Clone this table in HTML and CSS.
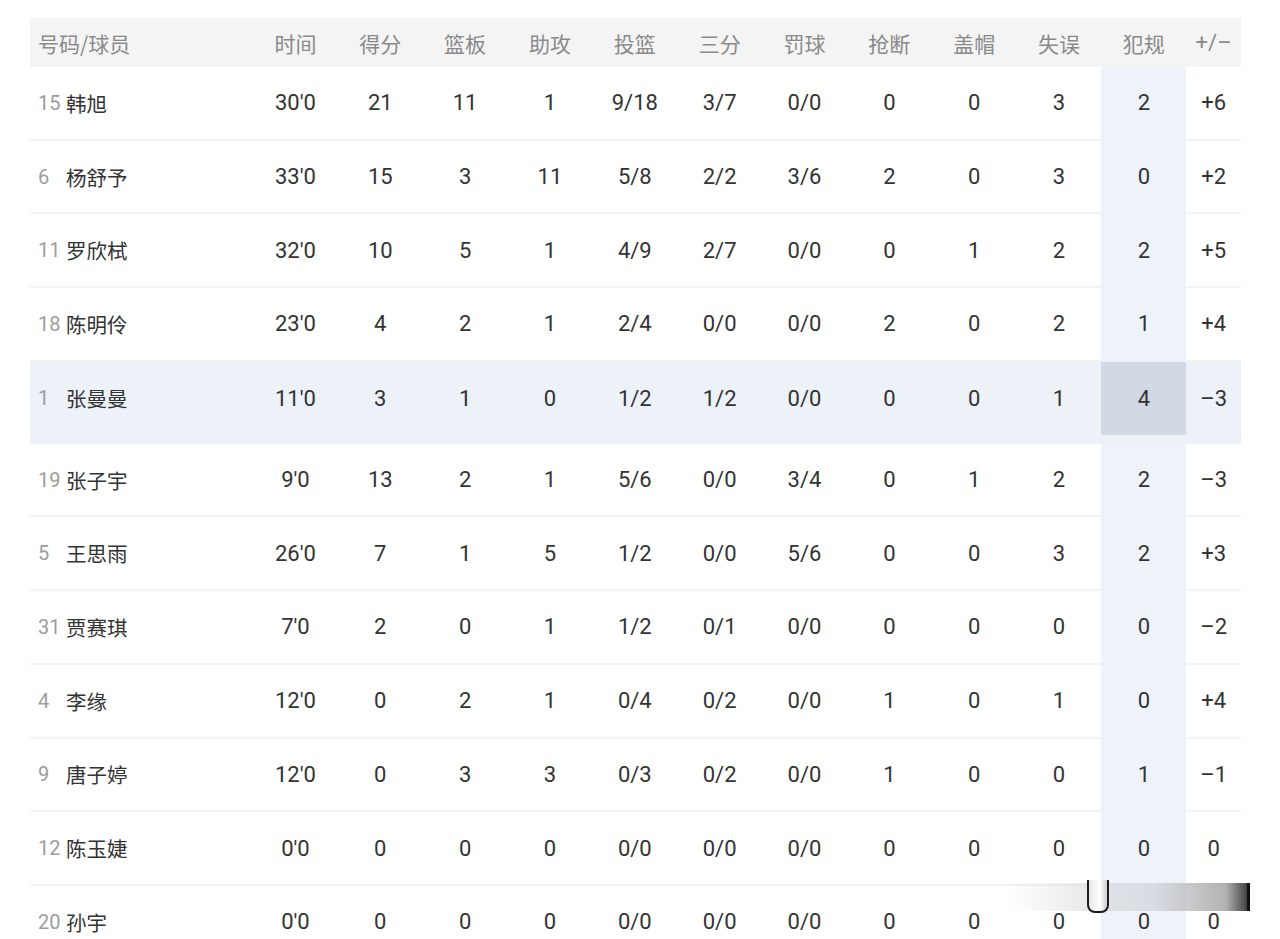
FILE: index.html
```html
<!DOCTYPE html>
<html lang="zh-CN">
<head>
<meta charset="utf-8">
<title>球员数据</title>
<link rel="stylesheet" href="styles.css">
</head>
<body>
<div class="table">
  <div class="row head">
    <div class="cell name">号码/球员</div>
    <div class="cell">时间</div><div class="cell">得分</div><div class="cell">篮板</div><div class="cell">助攻</div><div class="cell">投篮</div><div class="cell">三分</div><div class="cell">罚球</div><div class="cell">抢断</div><div class="cell">盖帽</div><div class="cell">失误</div><div class="cell">犯规</div><div class="cell pm">+/–</div>
  </div>
  <div class="row"><div class="cell name"><span class="num">15</span><span class="player">韩旭</span></div><div class="cell">30'0</div><div class="cell">21</div><div class="cell">11</div><div class="cell">1</div><div class="cell">9/18</div><div class="cell">3/7</div><div class="cell">0/0</div><div class="cell">0</div><div class="cell">0</div><div class="cell">3</div><div class="cell foul">2</div><div class="cell pm">+6</div></div>
  <div class="row"><div class="cell name"><span class="num">6</span><span class="player">杨舒予</span></div><div class="cell">33'0</div><div class="cell">15</div><div class="cell">3</div><div class="cell">11</div><div class="cell">5/8</div><div class="cell">2/2</div><div class="cell">3/6</div><div class="cell">2</div><div class="cell">0</div><div class="cell">3</div><div class="cell foul">0</div><div class="cell pm">+2</div></div>
  <div class="row"><div class="cell name"><span class="num">11</span><span class="player">罗欣栻</span></div><div class="cell">32'0</div><div class="cell">10</div><div class="cell">5</div><div class="cell">1</div><div class="cell">4/9</div><div class="cell">2/7</div><div class="cell">0/0</div><div class="cell">0</div><div class="cell">1</div><div class="cell">2</div><div class="cell foul">2</div><div class="cell pm">+5</div></div>
  <div class="row"><div class="cell name"><span class="num">18</span><span class="player">陈明伶</span></div><div class="cell">23'0</div><div class="cell">4</div><div class="cell">2</div><div class="cell">1</div><div class="cell">2/4</div><div class="cell">0/0</div><div class="cell">0/0</div><div class="cell">2</div><div class="cell">0</div><div class="cell">2</div><div class="cell foul">1</div><div class="cell pm">+4</div></div>
  <div class="row hl"><div class="cell name"><span class="num">1</span><span class="player">张曼曼</span></div><div class="cell">11'0</div><div class="cell">3</div><div class="cell">1</div><div class="cell">0</div><div class="cell">1/2</div><div class="cell">1/2</div><div class="cell">0/0</div><div class="cell">0</div><div class="cell">0</div><div class="cell">1</div><div class="cell foul">4</div><div class="cell pm">–3</div></div>
  <div class="row"><div class="cell name"><span class="num">19</span><span class="player">张子宇</span></div><div class="cell">9'0</div><div class="cell">13</div><div class="cell">2</div><div class="cell">1</div><div class="cell">5/6</div><div class="cell">0/0</div><div class="cell">3/4</div><div class="cell">0</div><div class="cell">1</div><div class="cell">2</div><div class="cell foul">2</div><div class="cell pm">–3</div></div>
  <div class="row"><div class="cell name"><span class="num">5</span><span class="player">王思雨</span></div><div class="cell">26'0</div><div class="cell">7</div><div class="cell">1</div><div class="cell">5</div><div class="cell">1/2</div><div class="cell">0/0</div><div class="cell">5/6</div><div class="cell">0</div><div class="cell">0</div><div class="cell">3</div><div class="cell foul">2</div><div class="cell pm">+3</div></div>
  <div class="row"><div class="cell name"><span class="num">31</span><span class="player">贾赛琪</span></div><div class="cell">7'0</div><div class="cell">2</div><div class="cell">0</div><div class="cell">1</div><div class="cell">1/2</div><div class="cell">0/1</div><div class="cell">0/0</div><div class="cell">0</div><div class="cell">0</div><div class="cell">0</div><div class="cell foul">0</div><div class="cell pm">–2</div></div>
  <div class="row"><div class="cell name"><span class="num">4</span><span class="player">李缘</span></div><div class="cell">12'0</div><div class="cell">0</div><div class="cell">2</div><div class="cell">1</div><div class="cell">0/4</div><div class="cell">0/2</div><div class="cell">0/0</div><div class="cell">1</div><div class="cell">0</div><div class="cell">1</div><div class="cell foul">0</div><div class="cell pm">+4</div></div>
  <div class="row"><div class="cell name"><span class="num">9</span><span class="player">唐子婷</span></div><div class="cell">12'0</div><div class="cell">0</div><div class="cell">3</div><div class="cell">3</div><div class="cell">0/3</div><div class="cell">0/2</div><div class="cell">0/0</div><div class="cell">1</div><div class="cell">0</div><div class="cell">0</div><div class="cell foul">1</div><div class="cell pm">–1</div></div>
  <div class="row"><div class="cell name"><span class="num">12</span><span class="player">陈玉婕</span></div><div class="cell">0'0</div><div class="cell">0</div><div class="cell">0</div><div class="cell">0</div><div class="cell">0/0</div><div class="cell">0/0</div><div class="cell">0/0</div><div class="cell">0</div><div class="cell">0</div><div class="cell">0</div><div class="cell foul">0</div><div class="cell pm">0</div></div>
  <div class="row"><div class="cell name"><span class="num">20</span><span class="player">孙宇</span></div><div class="cell">0'0</div><div class="cell">0</div><div class="cell">0</div><div class="cell">0</div><div class="cell">0/0</div><div class="cell">0/0</div><div class="cell">0/0</div><div class="cell">0</div><div class="cell">0</div><div class="cell">0</div><div class="cell foul">0</div><div class="cell pm">0</div></div>
</div>
<div class="wm"><div class="wm-u"></div></div>
</body>
</html>
```

FILE: styles.css
```css
html, body {
  margin: 0;
  padding: 0;
  background: #ffffff;
}
body {
  position: relative;
  height: 939px;
  overflow: hidden;
  font-family: Roboto, "Noto Sans CJK SC", sans-serif;
  color: #333333;
}
.table {
  margin: 18px 0 0 30px;
  width: 1211px;
}
.row {
  display: grid;
  grid-template-columns: 223px repeat(11, 84.85px) 54.65px;
  height: 73.7px;
  background: linear-gradient(#f3f3f3, #f3f3f3) left bottom / 100% 2px no-repeat;
}
.row.head {
  height: 49px;
  background: #f4f4f4;
}
.cell {
  display: flex;
  align-items: center;
  justify-content: center;
  font-size: 22px;
  font-weight: 400;
  height: 73.7px;
  padding-bottom: 2px;
  box-sizing: border-box;
}
.head .cell {
  height: 49px;
  padding-bottom: 0;
  color: #8a8a8a;
  font-family: "Noto Sans CJK SC", sans-serif;
  font-weight: 400;
  font-size: 21px;
}
.head .cell.pm {
  font-family: Roboto, sans-serif;
  font-weight: 400;
  font-size: 22px;
}
.cell.name {
  justify-content: flex-start;
  padding-left: 8px;
}
.num {
  width: 28px;
  font-size: 20px;
  font-weight: 400;
  color: #9c9c9c;
}
.player {
  font-family: "Noto Sans CJK SC", sans-serif;
  font-weight: 400;
  font-size: 20.5px;
  color: #333333;
}
.cell.foul {
  background: #eef2f9;
}
.row.hl {
  height: 82px;
  background: #edf1f8;
}
.row.hl .cell {
  height: 73px;
  padding-bottom: 0;
}
.row.hl .cell.foul {
  background: #d1d9e5;
}
.wm {
  position: absolute;
  left: 1008px;
  top: 883px;
  width: 242px;
  height: 28px;
  background: linear-gradient(to right, rgba(255,255,255,0) 0%, rgba(215,215,215,0.5) 30%, rgba(205,208,214,0.65) 60%, rgba(160,160,160,0.8) 90%, rgba(60,60,60,0.95) 98.5%, #111 99%);
}
.wm-u {
  position: absolute;
  left: 79px;
  top: -3px;
  width: 18px;
  height: 31px;
  border: 2px solid #1d1d1d;
  border-top: none;
  border-radius: 0 0 8px 8px;
  background: linear-gradient(to right, #e8e8e8, #ffffff 60%, #cfcfcf);
}
```
